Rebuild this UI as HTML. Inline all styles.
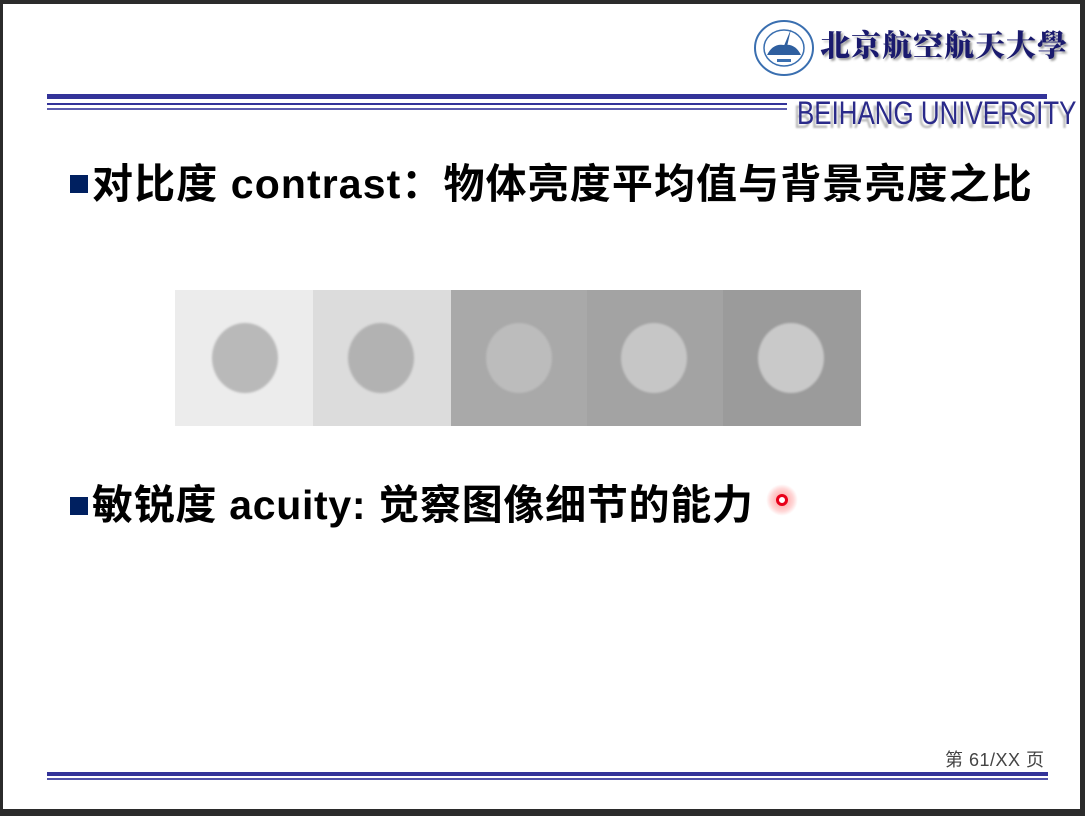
<!DOCTYPE html>
<html><head><meta charset="utf-8"><style>
html,body{margin:0;padding:0}
body{width:1085px;height:816px;background:#2b2b2b;position:relative;overflow:hidden;font-family:"Liberation Sans","Noto Sans CJK SC",sans-serif}
.page{position:absolute;left:3px;top:4px;width:1077px;height:805px;background:#fff}
.abs{position:absolute}
.line{position:absolute;background:#333399}
.t{position:absolute;font-weight:bold;font-size:41px;color:#000;white-space:nowrap;line-height:1}
.sq{position:absolute;width:18px;height:18px;background:#002060}
</style></head><body>
<div class="page"></div>
<svg class="abs" style="left:753px;top:19px" width="62" height="58" viewBox="0 0 62 58">
<ellipse cx="31" cy="29" rx="29" ry="27" fill="#fff" stroke="#3a6fb0" stroke-width="2"/>
<ellipse cx="31" cy="29" rx="20" ry="18" fill="#fff" stroke="#3a6fb0" stroke-width="1.5"/>
<path d="M14 36 Q20 24 31 26 Q42 24 48 36 Z" fill="#2f5f9f"/>
<path d="M38 10 L28 34 L33 32 Z" fill="#2f5f9f"/>
<rect x="24" y="40" width="14" height="3" fill="#3a6fb0"/>
</svg>
<div class="abs" style="left:820px;top:28px;font-family:'Noto Serif CJK SC',serif;font-weight:900;font-size:30px;color:#1a1a6e;letter-spacing:1px;text-shadow:2px 2px 2px #999;white-space:nowrap;line-height:1">北京航空航天大學</div>
<div class="line" style="left:47px;top:94px;width:1000px;height:5px"></div>
<div class="line" style="left:47px;top:103px;width:740px;height:2px"></div>
<div class="line" style="left:47px;top:108px;width:740px;height:2px;opacity:.8"></div>
<div class="abs" style="left:797px;top:97px;font-size:32px;color:#2a2a8a;transform:scaleX(0.81);transform-origin:left top;white-space:nowrap;text-shadow:-4px 4px 2px #bbb;line-height:1">BEIHANG UNIVERSITY</div>
<div class="sq" style="left:70px;top:175px"></div>
<div class="t" style="left:92px;top:164px;letter-spacing:1.1px">对比度 contrast：物体亮度平均值与背景亮度之比</div>
<div class="abs" style="left:175px;top:290px;width:138px;height:136px;background:#ececec"></div>
<div class="abs" style="left:313px;top:290px;width:138px;height:136px;background:#dcdcdc"></div>
<div class="abs" style="left:451px;top:290px;width:136px;height:136px;background:#a9a9a9"></div>
<div class="abs" style="left:587px;top:290px;width:136px;height:136px;background:#a3a3a3"></div>
<div class="abs" style="left:723px;top:290px;width:138px;height:136px;background:#9b9b9b"></div>
<div class="abs" style="left:212px;top:323px;width:66px;height:70px;border-radius:50%;background:#b9b9b9;filter:blur(1px)"></div>
<div class="abs" style="left:348px;top:323px;width:66px;height:70px;border-radius:50%;background:#b2b2b2;filter:blur(1px)"></div>
<div class="abs" style="left:486px;top:323px;width:66px;height:70px;border-radius:50%;background:#bcbcbc;filter:blur(1px)"></div>
<div class="abs" style="left:621px;top:323px;width:66px;height:70px;border-radius:50%;background:#c6c6c6;filter:blur(1px)"></div>
<div class="abs" style="left:758px;top:323px;width:66px;height:70px;border-radius:50%;background:#c9c9c9;filter:blur(1px)"></div>
<div class="sq" style="left:70px;top:497px"></div>
<div class="t" style="left:92px;top:485px;letter-spacing:0.7px">敏锐度 acuity: 觉察图像细节的能力</div>
<div class="abs" style="left:766px;top:484px;width:32px;height:32px;border-radius:50%;background:radial-gradient(circle,rgba(255,80,80,.6) 0,rgba(255,120,120,.3) 50%,rgba(255,255,255,0) 70%)"></div>
<div class="abs" style="left:776px;top:494px;width:6px;height:6px;border-radius:50%;border:3px solid #e8001a;background:#fff"></div>
<div class="abs" style="left:945px;top:751px;font-size:18px;color:#444;white-space:nowrap;line-height:1;letter-spacing:0.5px">第 61/XX 页</div>
<div class="line" style="left:47px;top:772px;width:1001px;height:4px"></div>
<div class="line" style="left:47px;top:778px;width:1001px;height:2px;opacity:.85"></div>
</body></html>
